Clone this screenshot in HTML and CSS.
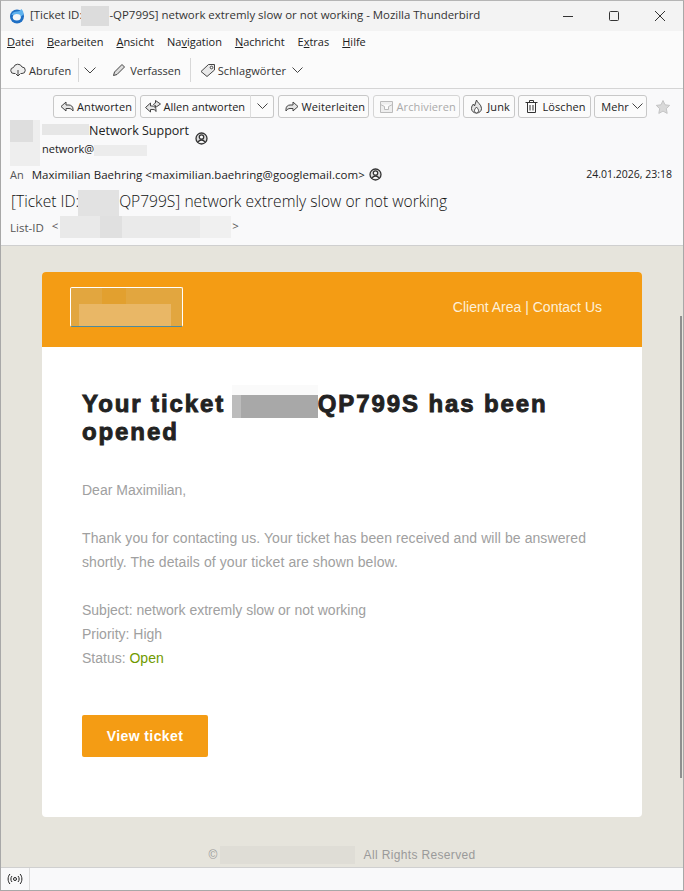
FILE: index.html
```html
<!doctype html>
<html lang="de">
<head>
  <meta charset="UTF-8">
  <title>[Ticket ID: -QP799S] network extremly slow or not working - Mozilla Thunderbird</title>
  <link rel="stylesheet" href="styles.css">
</head>
<body>
  <div class="window">
    <!-- title bar -->
    <header class="titlebar">
      <svg class="app-logo" width="16" height="16" viewBox="0 0 16 16">
        <circle cx="8" cy="8.500" r="7" fill="#1f6fc4"/>
        <path d="M2.500 7C3.500 4 5.500 3.500 8 3.500c1.800 0 3.300-.8 4.300-2.500 1.700 1.500 2.500 3.500 2.200 5.500l-3 2.500C11 7.500 9.700 6.500 8 6.500 5.500 6.500 4 7 2.500 7z" fill="#5fb2ee"/>
        <ellipse cx="7.800" cy="9.200" rx="4" ry="3.200" fill="#f4f6f8"/>
      </svg>
      <span class="title">[Ticket ID:<span class="blur blur-title"></span>-QP799S] network extremly slow or not working - Mozilla Thunderbird</span>
      <div class="win-controls">
        <svg width="12" height="12" viewBox="0 0 12 12"><path d="M1 6.500h10" stroke="#333" fill="none"/></svg>
        <svg width="12" height="12" viewBox="0 0 12 12"><rect x="1.500" y="1.500" width="9" height="9" rx="1" stroke="#333" fill="none"/></svg>
        <svg width="12" height="12" viewBox="0 0 12 12"><path d="M1 1l10 10M11 1L1 11" stroke="#333" fill="none"/></svg>
      </div>
    </header>

    <!-- menu bar -->
    <nav class="menubar">
      <span><u>D</u>atei</span>
      <span><u>B</u>earbeiten</span>
      <span><u>A</u>nsicht</span>
      <span>Na<u>v</u>igation</span>
      <span><u>N</u>achricht</span>
      <span>E<u>x</u>tras</span>
      <span><u>H</u>ilfe</span>
    </nav>

    <!-- main toolbar -->
    <div class="toolbar">
      <span class="tool">
        <svg width="16" height="16" viewBox="0 0 16 16" fill="#eee" stroke="#444"><path d="M5 11.500H4a3 3 0 0 1-.5-6 4.500 4.500 0 0 1 8.500-.5 3 3 0 0 1 0 6.500h-1"/><path d="M8 8v6M5.500 11.500L8 14l2.500-2.500" fill="none"/></svg>
        Abrufen
      </span>
      <span class="tool-sep"></span>
      <svg class="chev chev-abrufen" width="12" height="7" viewBox="0 0 12 7" fill="none" stroke="#444"><path d="M.5 .5L6 6l5.500-5.500"/></svg>
      <span class="tool tool-write">
        <svg width="14" height="14" viewBox="0 0 14 14" fill="#ddd" stroke="#444"><path d="M1.500 12.500l1-3.500 7.500-7.500 2.500 2.500-7.500 7.500z"/></svg>
        Verfassen
      </span>
      <span class="tool-sep tool-sep-wide"></span>
      <span class="tool tool-tags">
        <svg width="16" height="16" viewBox="0 0 16 16" fill="#e8e8e8" stroke="#444"><path d="M1 9.500L8.500 2.500H14.500V8L7 14.500z"/><circle cx="11.500" cy="5.500" r="1.300" fill="#fff"/></svg>
        Schlagwörter
        <svg class="chev chev-tags" width="11" height="7" viewBox="0 0 11 7" fill="none" stroke="#444"><path d="M.5 .5L5.500 5.500l5-5"/></svg>
      </span>
    </div>

    <!-- message header -->
    <section class="msg-head">
      <div class="actions">
        <span class="btn">
          <svg width="14" height="12" viewBox="0 0 14 12" fill="#e4e4e4" stroke="#444"><path d="M6 1L1 5.500 6 10V7.500h3c1.500 0 3 .8 4 2.500V8c0-2.500-2-4-4-4H6z"/></svg>
          Antworten
        </span>
        <span class="btn-group">
          <span class="btn btn-all">
            <svg width="16" height="14" viewBox="0 0 16 14" fill="#e4e4e4" stroke="#444"><path d="M5.500 3L.5 7.500l5 4.500V9.500h2.500c1.500 0 2.500.7 3 2V10c0-2.500-1.500-4-4-4H5.500z"/><path d="M10.500 .5l5 3.500-5 3.500V5.500c-1 0-1.500-.5-2-1 .5-.5 1-1.500 2-1.500z"/></svg>
            Allen antworten
          </span>
          <span class="btn btn-more">
            <svg width="11" height="7" viewBox="0 0 11 7" fill="none" stroke="#444"><path d="M.5 .5L5.500 5.500l5-5"/></svg>
          </span>
        </span>
        <span class="btn">
          <svg width="14" height="12" viewBox="0 0 14 12" fill="#e4e4e4" stroke="#444"><path d="M8 1l5 4.500L8 10V7.500H5C3.500 7.500 2 8.300 1 10V8c0-2.500 2-4 4-4h3z"/></svg>
          Weiterleiten
        </span>
        <span class="btn btn-off">
          <svg width="15" height="14" viewBox="0 0 15 14" fill="#eee" stroke="#bbb"><path d="M1.500 1.500h12v11h-12zM1.500 4.500l4 2v3h4v-3l4-2"/></svg>
          Archivieren
        </span>
        <span class="btn btn-roomy">
          <svg width="13" height="15" viewBox="0 0 13 15" fill="#e4e4e4" stroke="#444"><path d="M6.500 1c.5 2.500 5 4.500 5 8.500 0 2.500-2 4.500-5 4.500s-5-2-5-4.500c0-2 1-3.500 2-4.500l1 2C5 5 6 3 6.500 1z"/><path d="M6.500 8c.5 1 2 2 2 3.500S7.500 14 6.500 14s-2-1-2-2.500S6 9 6.500 8z" fill="#fff"/></svg>
          Junk
        </span>
        <span class="btn btn-roomy">
          <svg width="13" height="15" viewBox="0 0 13 15" fill="none" stroke="#333"><path d="M.5 3.500h12M4.500 3.500V1.500h4v2M2.500 3.500v10h8v-10M5 6v5.500M8 6v5.500"/></svg>
          Löschen
        </span>
        <span class="btn">
          Mehr
          <svg width="11" height="7" viewBox="0 0 11 7" fill="none" stroke="#444"><path d="M.5 .5L5.500 5.500l5-5"/></svg>
        </span>
        <svg class="star" width="16" height="16" viewBox="0 0 16 16"><path d="M8 1.500l2 4.300 4.700.6-3.400 3.300.9 4.700L8 12.100l-4.200 2.300.9-4.700L1.300 6.400 6 5.800z" fill="#d9d9d9" stroke="#c4c4c4"/></svg>
      </div>

      <div class="from">
        <div class="avatar-blur"></div>
        <div class="from-text">
          <div class="from-name"><span class="blur blur-name"></span>Network Support
            <svg class="person" width="13" height="13" viewBox="0 0 13 13" fill="#ddd" stroke="#333" stroke-width="1.300"><circle cx="6.500" cy="6.500" r="5.500"/><circle cx="6.500" cy="5" r="2.200" fill="#fff"/><path d="M3 10.500c.8-2 2-2.500 3.500-2.500s2.700.5 3.500 2.500" fill="#fff"/></svg>
          </div>
          <div class="from-mail">network@<span class="blur blur-mail"></span></div>
        </div>
      </div>

      <div class="to-row">
        <span class="label">An</span>
        <span class="to-addr">Maximilian Baehring &lt;maximilian.baehring@googlemail.com&gt;</span>
        <svg class="person" width="13" height="13" viewBox="0 0 13 13" fill="#ddd" stroke="#333" stroke-width="1.300"><circle cx="6.500" cy="6.500" r="5.500"/><circle cx="6.500" cy="5" r="2.200" fill="#fff"/><path d="M3 10.500c.8-2 2-2.500 3.500-2.500s2.700.5 3.500 2.500" fill="#fff"/></svg>
        <span class="date">24.01.2026, 23:18</span>
      </div>

      <div class="subject">[Ticket ID:<span class="blur blur-subject"></span>QP799S] network extremly slow or not working</div>

      <div class="list-row">
        <span class="label">List-ID</span>
        <span class="label">&lt;<span class="blur blur-list"></span>&gt;</span>
      </div>
    </section>

    <!-- mail body -->
    <main class="mail">
      <div class="card">
        <div class="card-top">
          <div class="logo-blur"></div>
          <div class="top-links">Client Area | Contact Us</div>
        </div>
        <div class="card-body">
          <h1>Your ticket <span class="blur-h"></span>QP799S has been opened</h1>
          <p>Dear Maximilian,</p>
          <p class="thanks">Thank you for contacting us. Your ticket has been received and will be answered shortly. The details of your ticket are shown below.</p>
          <p>Subject: network extremly slow or not working<br>Priority: High<br>Status: <span class="open">Open</span></p>
          <a href="#" class="view-btn">View ticket</a>
        </div>
      </div>
      <div class="copyright">©<span class="blur-foot"></span>All Rights Reserved</div>
      <div class="scrollbar"></div>
    </main>

    <footer class="statusbar">
      <span class="status-cell">
        <svg width="16" height="12" viewBox="0 0 16 12" fill="none" stroke="#222"><circle cx="8" cy="6" r="1.500"/><path d="M5 3c-1.500 1.500-1.500 4.500 0 6M11 3c1.500 1.500 1.500 4.500 0 6M3 1c-2.500 2.500-2.500 7.500 0 10M13 1c2.500 2.500 2.500 7.500 0 10"/></svg>
      </span>
    </footer>
  </div>
</body>
</html>
```

FILE: styles.css
```css
* {
  box-sizing: border-box;
}
html, body {
  margin: 0;
  height: 100%;
  overflow: hidden;
}
body {
  font-family: "Open Sans", "Noto Sans", sans-serif;
  font-size: 11px;
  color: #222;
  background: #fff;
}
svg {
  flex: none;
}
.window {
  display: flex;
  flex-direction: column;
  height: 891px;
  border: 1px solid #a8a8a8;
  border-top-color: #b5b5b5;
}
.blur {
  display: inline-block;
  vertical-align: middle;
  background: #e4e4e4;
}

/* title bar */
.titlebar {
  display: flex;
  align-items: center;
  height: 30px;
  padding-left: 8px;
  background: #f3f3f3;
  font-size: 11.450px;
  color: #333;
  white-space: nowrap;
}
.app-logo {
  margin-right: 5px;
}
.blur-title {
  width: 28px;
  height: 20px;
  margin-left: -1px;
  background: #dcdcdc;
}
.win-controls {
  display: flex;
  gap: 34px;
  margin-left: auto;
  padding-right: 17px;
}

/* menu */
.menubar {
  display: flex;
  gap: 13px;
  height: 25px;
  padding: 3px 0 0 6px;
  background: #fbfbfb;
  font-size: 11px;
}

/* toolbar */
.toolbar {
  display: flex;
  align-items: center;
  height: 33px;
  padding: 0 0 4px 9px;
  background: #fbfbfb;
  border-bottom: 1px solid #d5d5d5;
  color: #333;
  letter-spacing: .1px;
}
.tool {
  display: flex;
  align-items: center;
  gap: 3px;
}
.tool-sep {
  width: 1px;
  height: 24px;
  margin: 0 5px 0 7px;
  background: #d8d8d8;
}
.tool-sep-wide {
  margin: 0 9px 0 9px;
}
.tool-write {
  gap: 4px;
  margin-left: 16px;
  letter-spacing: 0;
}
.tool-tags {
  gap: 2px;
}
.chev-tags {
  margin-left: 4px;
}

/* message header */
.msg-head {
  display: flex;
  flex-direction: column;
  height: 157px;
  padding: 6px 6px 0 9px;
  background: #f9f9fa;
  border-bottom: 1px solid #cfcfcf;
}
.actions {
  display: flex;
  gap: 3.500px;
  align-items: center;
  padding-left: 43px;
  letter-spacing: .1px;
}
.btn {
  display: inline-flex;
  align-items: center;
  gap: 3px;
  height: 23px;
  padding: 0 3px 0 6px;
  background: #fbfbfb;
  border: 1px solid #c8c8c8;
  border-radius: 3px;
  white-space: nowrap;
}
.btn-group {
  display: flex;
}
.btn-all {
  padding: 0 5px 0 4px;
  border-radius: 3px 0 0 3px;
  letter-spacing: 0;
}
.btn-more {
  border-left-color: #ddd;
  margin-left: -1px;
  border-radius: 0 3px 3px 0;
  padding: 0 5px 0 6px;
}
.btn-off {
  padding: 0 3px 0 5px;
  color: #aaa;
  border-color: #d5d5d5;
}
.btn-roomy {
  gap: 4px;
  padding: 0 4px 0 6px;
}
.star {
  margin-left: 5px;
}
.from {
  display: flex;
  height: 46px;
  margin-top: 2px;
}
.avatar-blur {
  width: 30px;
  height: 46px;
  margin-right: 2px;
  background: linear-gradient(90deg, #dedede 0 23px, transparent 23px) 0 0 / 100% 22px no-repeat, #eee;
}
.from-name {
  display: flex;
  align-items: flex-start;
  height: 18px;
  margin-top: 2px;
  font-size: 12.500px;
  line-height: 18px;
}
.blur-name {
  width: 47px;
  height: 11px;
  margin: 2px 0 0;
  background: #e6e6e6;
}
.from-name .person {
  margin: 10px 0 0 6px;
}
.from-mail {
  margin-top: 1px;
  font-size: 11px;
}
.blur-mail {
  width: 53px;
  height: 11px;
  background: #ececec;
}
.to-row {
  display: flex;
  align-items: center;
  height: 18px;
  margin-top: -1px;
  font-size: 11.500px;
}
.to-row .label {
  margin-right: 8px;
  font-size: 11px;
}
.to-addr {
  letter-spacing: .05px;
}
.to-row .person {
  margin-left: 4px;
}
.label {
  color: #555;
}
.date {
  margin-left: auto;
  padding-right: 5px;
  font-size: 10.500px;
}
.subject {
  height: 26px;
  margin-top: 3px;
  padding: 4px 0 0 1px;
  font-size: 15.600px;
  font-weight: 300;
  color: #111;
  white-space: nowrap;
}
.blur-subject {
  width: 41px;
  height: 26px;
  margin-left: -1px;
  background: #e2e2e2;
}
.list-row {
  display: flex;
  align-items: center;
  gap: 8px;
  height: 24px;
  margin-top: 3px;
  font-size: 11.500px;
}
.blur-list {
  width: 171px;
  height: 22px;
  margin: 0 1px 0 2px;
  background: linear-gradient(90deg, #e9e9e9 0 40px, #e0e0e0 40px 62px, #eaeaea 62px 140px, #f0f0f0 140px);
}

/* mail */
.mail {
  position: relative;
  flex: 1;
  padding: 26px 41px 0;
  overflow: hidden;
  background: #e6e4dc;
  font-family: "Liberation Sans", Arial, sans-serif;
}
.card {
  background: #fff;
  border-radius: 4px;
  overflow: hidden;
}
.card-top {
  display: flex;
  align-items: center;
  justify-content: space-between;
  height: 75px;
  padding: 0 40px 5px 28px;
  background: #f49c14;
}
.logo-blur {
  width: 113px;
  height: 40px;
  background: linear-gradient(#e9b766, #e9b766) 8px 16px / 92px 100% no-repeat,
    linear-gradient(90deg, #e2a63f 0 31px, #e2a02f 31px 55px, #e2a63f 55px);
  border: 1px solid #fff;
  border-bottom-color: #4f8a9c;
  border-radius: 2px;
}
.top-links {
  font-size: 14px;
  color: #fdf0d8;
}
.card-body {
  height: 470px;
  padding: 43px 40px 0;
  font-size: 14px;
  line-height: 24px;
  color: #a0a0a0;
}
h1 {
  margin: 0 0 32px;
  font-size: 24px;
  line-height: 28px;
  font-weight: 700;
  letter-spacing: 1.900px;
  color: #222;
  -webkit-text-stroke: .9px #222;
}
.blur-h {
  display: inline-block;
  width: 86px;
  height: 23px;
  margin-left: -2px;
  vertical-align: -6px;
  background: linear-gradient(90deg, #bcbcbc 0 9px, #a8a8a8 9px);
  box-shadow: 0 -10px 0 #fafafa;
}
.card-body p {
  margin: 0 0 24px;
}
.card-body .thanks {
  letter-spacing: .085px;
}
.open {
  color: #6f9a00;
}
.view-btn {
  display: flex;
  align-items: center;
  justify-content: center;
  width: 126px;
  height: 42px;
  margin-top: 45px;
  background: #f49c14;
  border-radius: 2px;
  color: #fff;
  font-size: 14px;
  font-weight: 700;
  letter-spacing: .4px;
  text-decoration: none;
}
.copyright {
  display: flex;
  align-items: center;
  justify-content: center;
  margin-top: 29px;
  font-size: 12px;
  color: #9a9a9a;
  letter-spacing: .35px;
}
.blur-foot {
  display: inline-block;
  width: 135px;
  height: 18px;
  margin: 0 9px 0 2px;
  background: #dfddd6;
}
.scrollbar {
  position: absolute;
  right: 1px;
  top: 70px;
  bottom: 89px;
  width: 2px;
  background: #8f8f8f;
}

/* status bar */
.statusbar {
  display: flex;
  height: 23px;
  background: #f9f9fa;
  border-top: 1px solid #d0d0d0;
}
.status-cell {
  display: flex;
  align-items: center;
  width: 29px;
  padding-left: 6px;
  border-right: 1px solid #dcdcdc;
}
```
